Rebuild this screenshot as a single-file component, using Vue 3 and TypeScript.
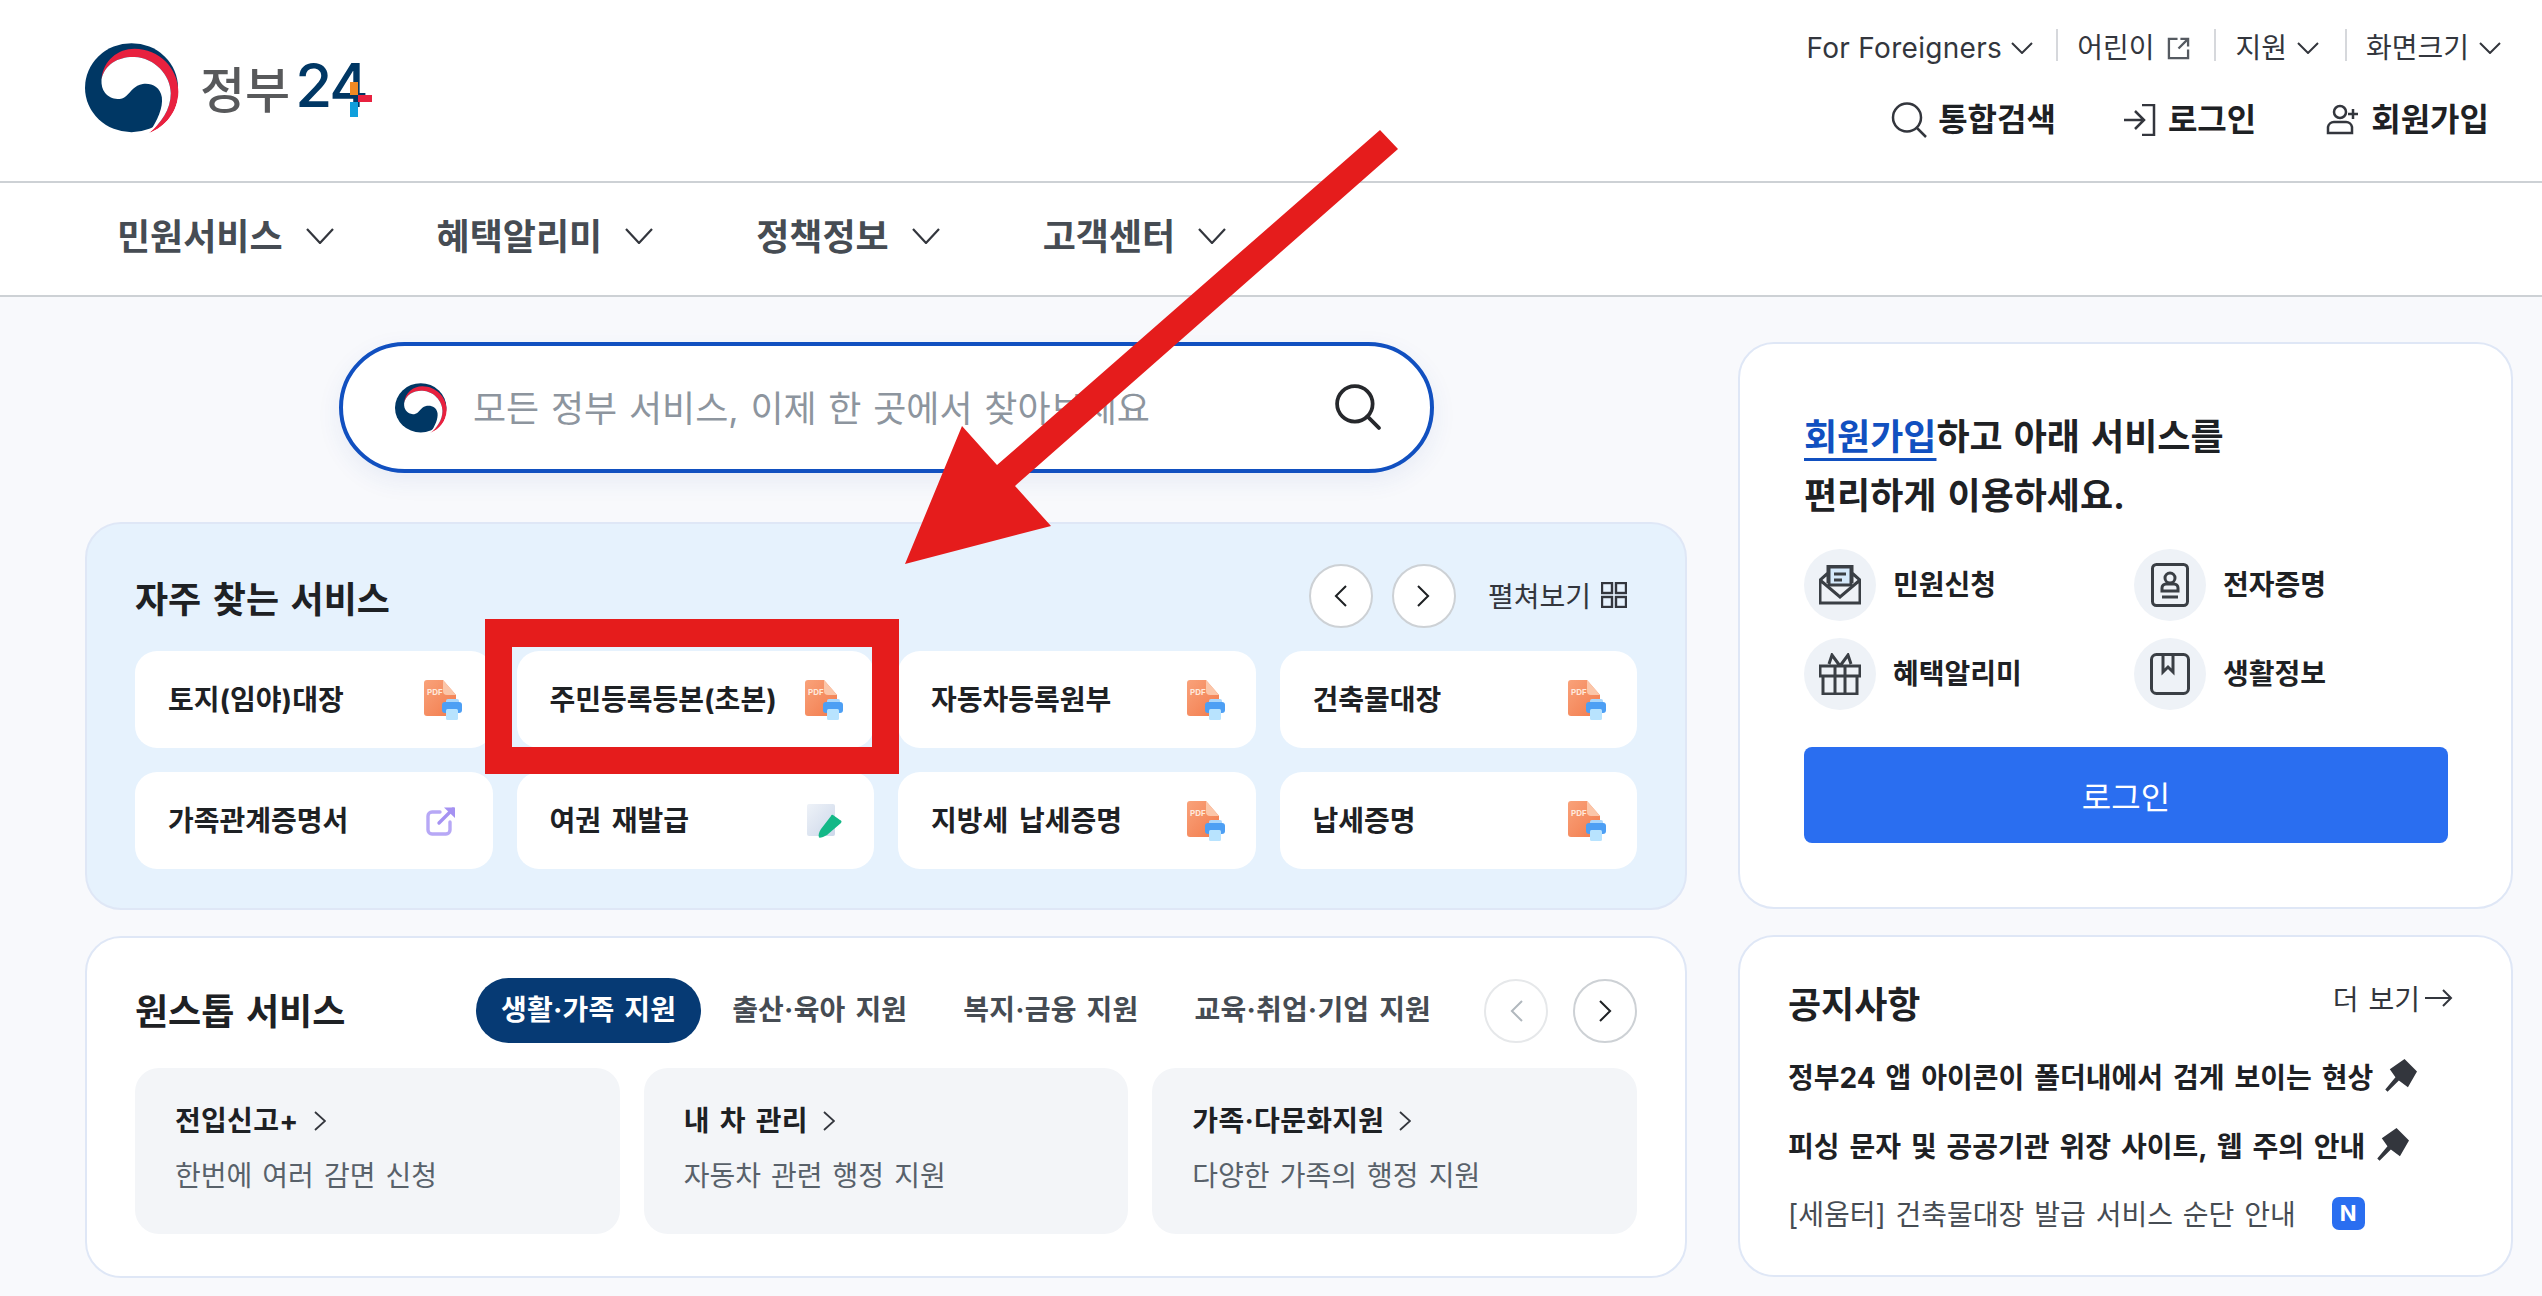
<script setup lang="ts">
interface Service {
  name: string
  icon: 'pdf' | 'link' | 'pen'
}

interface OneStop {
  title: string
  desc: string
}

const gnb = ['민원서비스', '혜택알리미', '정책정보', '고객센터']

const services: Service[] = [
  { name: '토지(임야)대장', icon: 'pdf' },
  { name: '주민등록등본(초본)', icon: 'pdf' },
  { name: '자동차등록원부', icon: 'pdf' },
  { name: '건축물대장', icon: 'pdf' },
  { name: '가족관계증명서', icon: 'link' },
  { name: '여권 재발급', icon: 'pen' },
  { name: '지방세 납세증명', icon: 'pdf' },
  { name: '납세증명', icon: 'pdf' }
]

const tabs = ['생활·가족 지원', '출산·육아 지원', '복지·금융 지원', '교육·취업·기업 지원']

const oneStops: OneStop[] = [
  { title: '전입신고+', desc: '한번에 여러 감면 신청' },
  { title: '내 차 관리', desc: '자동차 관련 행정 지원' },
  { title: '가족·다문화지원', desc: '다양한 가족의 행정 지원' }
]
</script>

<template>
  <div class="page">
    <svg class="defs" width="0" height="0" aria-hidden="true">
      <defs>
        <linearGradient id="pdf-doc" x1="0" y1="0" x2="1" y2="1">
          <stop offset="0" stop-color="#f9a27a" />
          <stop offset="1" stop-color="#f27b4c" />
        </linearGradient>
        <linearGradient id="pen-doc" x1="0" y1="0" x2="1" y2="1">
          <stop offset="0" stop-color="#eef2f8" />
          <stop offset="1" stop-color="#cdd8ea" />
        </linearGradient>
        <symbol id="taegeuk" viewBox="75 68 285 272">
          <ellipse cx="216" cy="203" rx="141" ry="135" fill="#003764" />
          <path d="M125 178C130 120 175 85 225 85C300 85 358 145 358 215C358 275 318 322 270 340C305 310 335 270 335 220C335 165 285 112 225 110C180 108 135 130 125 178Z" fill="#e8213f" />
          <path d="M125 178C135 130 180 108 225 110C285 112 335 165 335 220C335 270 305 310 270 340C295 300 312 265 308 232C303 200 275 188 250 192C225 196 215 215 200 228C180 245 150 238 135 218C128 208 124 195 125 178Z" fill="#fff" />
          <path d="M270 340C318 322 358 275 358 215L362 340Z" fill="#fff" />
        </symbol>
        <symbol id="pdf" viewBox="0 0 38 40">
          <path d="M3 0H19L32 15V33A3 3 0 0 1 29 36H3A3 3 0 0 1 0 33V3A3 3 0 0 1 3 0Z" fill="url(#pdf-doc)" />
          <path d="M19 0L32 15H23A4 4 0 0 1 19 11Z" fill="#fbc6a9" />
          <text x="3" y="15" font-size="8" font-weight="700" fill="#ffe9dc" font-family="Inter, sans-serif">PDF</text>
          <rect x="22" y="19" width="13" height="6" rx="2" fill="#a9d6fb" />
          <rect x="18" y="22" width="20" height="11" rx="3" fill="#4d9ff4" />
          <rect x="22" y="29" width="12" height="11" rx="1.5" fill="#b8e3fe" />
        </symbol>
        <symbol id="link" viewBox="0 0 30 30">
          <path d="M14 6H6A4 4 0 0 0 2 10V24A4 4 0 0 0 6 28H20A4 4 0 0 0 24 24V16" fill="none" stroke="#b7a8f6" stroke-width="3.4" stroke-linecap="round" />
          <path d="M13 17L27 3" fill="none" stroke="#a592f2" stroke-width="3.4" stroke-linecap="round" />
          <path d="M18 1.5H29V12Z" fill="#a592f2" />
        </symbol>
        <symbol id="pen" viewBox="0 0 36 34">
          <rect x="0" y="0" width="28" height="32" rx="2" fill="url(#pen-doc)" />
          <path d="M26 11L33 16A2 2 0 0 1 34 19L20 31C17 33 13 34 12 33.500C11 31 12 28 14 25L24 12A1.500 1.500 0 0 1 26 11Z" fill="#14b887" />
        </symbol>
      </defs>
    </svg>

    <header class="top">
      <a class="logo">
        <svg class="logo-mark"><use href="#taegeuk" /></svg>
        <span class="logo-ko">정부</span>
        <span class="logo-num">24</span>
        <span class="plus plus-top"></span>
        <span class="plus plus-right"></span>
        <span class="plus plus-bottom"></span>
      </a>
      <div class="top-right">
        <ul class="util">
          <li class="latin">
            For Foreigners
            <svg class="chev-sm" viewBox="0 0 22 12"><path d="M1 1L11 11L21 1" /></svg>
          </li>
          <li class="kids">
            어린이
            <svg class="ext" viewBox="0 0 24 24"><path d="M11 2H2V22H22V13M14 2H22V10M22 2L12 12" /></svg>
          </li>
          <li>
            지원
            <svg class="chev-sm" viewBox="0 0 22 12"><path d="M1 1L11 11L21 1" /></svg>
          </li>
          <li>
            화면크기
            <svg class="chev-sm" viewBox="0 0 22 12"><path d="M1 1L11 11L21 1" /></svg>
          </li>
        </ul>
        <div class="account">
          <a class="account-search">
            <svg width="37" height="36" viewBox="0 0 37 36"><circle cx="16" cy="15.500" r="14" /><path d="M26 26L35 35" /></svg>
            통합검색
          </a>
          <a>
            <svg width="33" height="32" viewBox="0 0 33 32"><path d="M1 16H20M12 7L21 16L12 25M19 1H31V31H19" /></svg>
            로그인
          </a>
          <a>
            <svg width="33" height="32" viewBox="0 0 33 32"><circle cx="14" cy="8" r="6" /><path d="M2 29V23A6 6 0 0 1 8 18H20A6 6 0 0 1 26 23V29ZM27 5V15M22 10H32" /></svg>
            회원가입
          </a>
        </div>
      </div>
    </header>

    <nav class="gnb">
      <a v-for="item in gnb" :key="item" class="gnb-item">
        {{ item }}
        <svg class="chev" viewBox="0 0 28 16"><path d="M1 1L14 15L27 1" /></svg>
      </a>
    </nav>

    <main class="main">
      <div class="col">
        <div class="search">
          <svg class="search-mark"><use href="#taegeuk" /></svg>
          <span class="search-text">모든 정부 서비스, 이제 한 곳에서 찾아보세요</span>
          <svg class="search-icon" viewBox="0 0 44 44"><circle cx="19" cy="19" r="17" /><path d="M31 31L42 42" /></svg>
        </div>

        <section class="panel panel-blue">
          <div class="panel-head">
            <h2 class="panel-title">자주 찾는 서비스</h2>
            <div class="head-tools">
              <button class="round">
                <svg viewBox="0 0 14 24"><path d="M13 1L2 12L13 23" /></svg>
              </button>
              <button class="round">
                <svg viewBox="0 0 14 24"><path d="M1 1L12 12L1 23" /></svg>
              </button>
              <span class="expand">
                <span class="expand-label">펼쳐보기</span>
                <svg width="26" height="26" viewBox="0 0 26 26">
                  <rect x="1" y="1" width="10" height="10" /><rect x="15" y="1" width="10" height="10" />
                  <rect x="1" y="15" width="10" height="10" /><rect x="15" y="15" width="10" height="10" />
                </svg>
              </span>
            </div>
          </div>
          <div class="service-grid">
            <a v-for="s in services" :key="s.name" class="service">
              <span class="service-name">{{ s.name }}</span>
              <svg class="service-icon" :class="s.icon"><use :href="'#' + s.icon" /></svg>
            </a>
          </div>
        </section>

        <section class="panel panel-stop">
          <div class="stop-head">
            <h2 class="panel-title stop-title">원스톱 서비스</h2>
            <div class="tabs">
              <a v-for="(tab, i) in tabs" :key="tab" class="tab" :class="{ active: i === 0 }">{{ tab }}</a>
            </div>
            <div class="stop-arrows">
              <button class="round round-white off">
                <svg viewBox="0 0 14 24"><path d="M13 1L2 12L13 23" /></svg>
              </button>
              <button class="round round-white">
                <svg viewBox="0 0 14 24"><path d="M1 1L12 12L1 23" /></svg>
              </button>
            </div>
          </div>
          <div class="stop-grid">
            <a v-for="c in oneStops" :key="c.title" class="stop-card">
              <strong>
                {{ c.title }}
                <svg class="stop-chev" viewBox="0 0 12 20"><path d="M1 1L11 10L1 19" /></svg>
              </strong>
              <span>{{ c.desc }}</span>
            </a>
          </div>
        </section>
      </div>

      <div class="col">
        <section class="panel join">
          <p class="join-text"><em>회원가입</em>하고 아래 서비스를<br />편리하게 이용하세요.</p>
          <div class="join-grid">
            <div class="join-item">
              <span class="join-icon">
                <svg width="42" height="40" viewBox="0 0 42 40">
                  <path d="M10 20V2H32V20Z" fill="#d5e9fb" />
                  <path d="M9 8L1 15V38H41V15L33 8M1 15L21 32L41 15M9 18V1H33V18M15 9H27M15 15H23" fill="none" />
                </svg>
              </span>
              <span class="join-label">민원신청</span>
            </div>
            <div class="join-item">
              <span class="join-icon">
                <svg width="38" height="44" viewBox="0 0 38 44">
                  <rect x="1.500" y="1.500" width="35" height="41" rx="4" fill="none" />
                  <circle cx="19" cy="15" r="5" fill="none" /><path d="M11 28V25A4 4 0 0 1 15 21H23A4 4 0 0 1 27 25V28ZM11 34H27" fill="none" />
                </svg>
              </span>
              <span class="join-label">전자증명</span>
            </div>
            <div class="join-item">
              <span class="join-icon">
                <svg width="42" height="42" viewBox="0 0 42 42">
                  <path d="M1 13H41V23H1ZM4 23V41H38V23M16 13V41M26 13V41M21 13L13 2L10 11M21 13L29 2L32 11" fill="none" />
                </svg>
              </span>
              <span class="join-label">혜택알리미</span>
            </div>
            <div class="join-item">
              <span class="join-icon">
                <svg width="40" height="42" viewBox="0 0 40 42">
                  <rect x="1.500" y="1.500" width="37" height="39" rx="5" fill="none" />
                  <path d="M13 2V19L18 14L23 19V2" fill="none" />
                </svg>
              </span>
              <span class="join-label">생활정보</span>
            </div>
          </div>
          <button class="login">로그인</button>
        </section>

        <section class="panel notice">
          <div class="notice-head">
            <h2 class="panel-title">공지사항</h2>
            <a class="more">
              더 보기
              <svg width="28" height="20" viewBox="0 0 28 20"><path d="M0 10H26M18 2L26 10L18 18" /></svg>
            </a>
          </div>
          <ul class="notice-list">
            <li class="strong">
              정부24 앱 아이콘이 폴더내에서 검게 보이는 현상
              <svg class="pin" viewBox="0 0 30 30"><path d="M19 0L30 11L22 25L14 19L4 29L2 27L11 16L6 9Z" /></svg>
            </li>
            <li class="strong">
              피싱 문자 및 공공기관 위장 사이트, 웹 주의 안내
              <svg class="pin" viewBox="0 0 30 30"><path d="M19 0L30 11L22 25L14 19L4 29L2 27L11 16L6 9Z" /></svg>
            </li>
            <li>
              [세움터] 건축물대장 발급 서비스 순단 안내
              <span class="new">N</span>
            </li>
          </ul>
        </section>
      </div>
    </main>

    <svg class="callout" width="2542" height="1296" viewBox="0 0 2542 1296" aria-hidden="true">
      <path fill-rule="evenodd" d="M485 619H899V774H485ZM512 647V747H872V647Z" />
      <path d="M1380 130L1398 149L1015 486L1051 526L905 564L962 426L997 465Z" />
    </svg>
  </div>
</template>

<style scoped>
.page {
  position: relative;
  width: 2542px;
  height: 1296px;
  overflow: hidden;
  background: #f8f9fc;
  color: #1e2124;
  font-family: Inter, "Noto Sans CJK KR", sans-serif;
}

.defs {
  position: absolute;
}

.top {
  display: flex;
  justify-content: space-between;
  height: 181px;
  box-sizing: border-box;
  background: #fff;
}

.logo {
  position: relative;
  display: flex;
  align-items: center;
  height: 90px;
  margin: 43px 0 0 85px;
}

.logo-mark {
  width: 94px;
  height: 90px;
  margin-right: 21px;
}

.logo-ko {
  margin-bottom: 4px;
  color: #58595b;
  font-family: "Noto Sans CJK KR", sans-serif;
  font-size: 49px;
  font-weight: 500;
  line-height: 1;
}

.logo-num {
  margin-left: 5px;
  margin-bottom: 6px;
  color: #003764;
  font-size: 60px;
  font-weight: 500;
  letter-spacing: -2px;
  line-height: 1;
}

.plus {
  position: absolute;
}

.plus-top {
  left: 265px;
  top: 39px;
  width: 8px;
  height: 13px;
  background: #f08a24;
}

.plus-right {
  left: 273px;
  top: 52px;
  width: 14px;
  height: 7px;
  background: #e8213f;
}

.plus-bottom {
  left: 265px;
  top: 59px;
  width: 8px;
  height: 15px;
  background: #0f9fdc;
}

.top-right {
  display: flex;
  flex-direction: column;
  align-items: flex-end;
  padding: 29px 41px 0 0;
}

.util {
  display: flex;
  height: 32px;
  margin: 0;
  padding: 0;
  list-style: none;
  font-size: 28px;
}

.util li {
  display: flex;
  align-items: center;
  gap: 10px;
  box-sizing: border-box;
  height: 32px;
  padding: 6px 26px 0 19px;
  border-left: 2px solid #d6d8dc;
  color: #33363d;
  line-height: 32px;
}

.util li:first-child {
  border-left: 0;
}

.util li:last-child {
  padding-right: 0;
}

.util li.latin {
  gap: 9px;
  padding-right: 23px;
  letter-spacing: 0.3px;
}

.util li.kids {
  gap: 13px;
  padding-right: 24px;
}

.chev-sm {
  width: 22px;
  height: 12px;
  fill: none;
  stroke: #33363d;
  stroke-width: 2;
}

.ext {
  width: 23px;
  height: 23px;
  fill: none;
  stroke: #555a61;
  stroke-width: 2.400;
}

.account {
  display: flex;
  gap: 70px;
  margin: 36px 12px 0 0;
  font-size: 32px;
  font-weight: 700;
}

.account a {
  display: flex;
  align-items: center;
  gap: 12px;
  line-height: 46px;
}

.account a.account-search {
  gap: 10px;
  margin-right: -3px;
}

.account svg {
  fill: none;
  stroke: #33363d;
  stroke-width: 2.500;
}

.gnb {
  display: flex;
  gap: 103px;
  box-sizing: border-box;
  height: 116px;
  padding: 0 0 10px 117px;
  align-items: center;
  background: #fff;
  border-top: 2px solid #cdd1d5;
  border-bottom: 2px solid #cdd1d5;
}

.gnb-item {
  display: flex;
  align-items: center;
  gap: 23px;
  color: #464c53;
  font-size: 36px;
  font-weight: 700;
}

.chev {
  width: 28px;
  height: 16px;
  margin-top: 4px;
  fill: none;
  stroke: #33363d;
  stroke-width: 2.200;
}

.main {
  display: grid;
  grid-template-columns: 1602px 775px;
  gap: 51px;
  padding: 45px 0 0 85px;
}

.col {
  display: flex;
  flex-direction: column;
  gap: 26px;
}

.search {
  display: flex;
  align-items: center;
  box-sizing: border-box;
  width: 1095px;
  height: 131px;
  margin: 0 0 23px 254px;
  padding: 0 49px 0 52px;
  background: #fff;
  border: 4px solid #1150c0;
  border-radius: 66px;
  box-shadow: 0 8px 24px rgba(40, 80, 160, 0.08);
}

.search-mark {
  width: 52px;
  height: 52px;
  margin-right: 26px;
}

.search-text {
  flex: 1;
  margin-bottom: 4px;
  color: #8d959e;
  font-size: 36px;
  word-spacing: 1.600px;
}

.search-icon {
  width: 46px;
  height: 46px;
  margin-bottom: 2px;
  fill: none;
  stroke: #26282c;
  stroke-width: 3.600;
  stroke-linecap: round;
}

.panel {
  box-sizing: border-box;
  border: 2px solid #dfe7f6;
  border-radius: 36px;
  background: #fff;
}

.panel-blue {
  height: 388px;
  padding: 40px 48px 0;
  background: #e6f2fd;
}

.panel-head {
  display: flex;
  justify-content: space-between;
  align-items: center;
  height: 64px;
  margin-bottom: 23px;
}

.panel-title {
  margin: 0;
  font-size: 36px;
  font-weight: 700;
  line-height: 50px;
  word-spacing: 3px;
}

.panel-head .panel-title {
  margin-top: 7px;
}

.head-tools {
  display: flex;
  align-items: center;
  gap: 19px;
  margin-right: 10px;
}

.round {
  display: flex;
  align-items: center;
  justify-content: center;
  box-sizing: border-box;
  width: 64px;
  height: 64px;
  padding: 0;
  background: #fff;
  border: 2px solid #cdd1d5;
  border-radius: 50%;
}

.round svg {
  width: 13px;
  height: 22px;
  fill: none;
  stroke: #1e2124;
  stroke-width: 2.200;
}

.round.off {
  border-color: #e6e8ea;
}

.round.off svg {
  stroke: #b1b8be;
}

.expand {
  display: flex;
  align-items: center;
  gap: 10px;
  margin-left: 13px;
  color: #33363d;
  font-size: 28px;
}

.expand-label {
  margin-bottom: 3px;
}

.expand svg {
  margin-bottom: 2px;
  fill: none;
  stroke: #33363d;
  stroke-width: 2.400;
}

.service-grid {
  display: grid;
  grid-template-columns: repeat(4, 1fr);
  grid-auto-rows: 97px;
  gap: 24px;
}

.service {
  display: flex;
  align-items: center;
  justify-content: space-between;
  padding: 0 31px 0 33px;
  background: #fff;
  border-radius: 22px;
  font-size: 28px;
  font-weight: 700;
  word-spacing: 4px;
}

.service-name {
  margin-bottom: 4px;
}

.service-icon {
  width: 38px;
  height: 40px;
}

.service-icon.link {
  width: 30px;
  height: 30px;
  margin-right: 6px;
}

.service-icon.pen {
  width: 36px;
  height: 34px;
}

.panel-stop {
  height: 342px;
  padding: 40px 48px 0;
}

.stop-head {
  display: flex;
  align-items: center;
  height: 65px;
  margin-bottom: 25px;
}

.stop-title {
  width: 341px;
  margin-top: 2px;
}

.tabs {
  display: flex;
  gap: 6px;
}

.tab {
  padding: 0 25px;
  border-radius: 33px;
  color: #464c53;
  font-size: 28px;
  font-weight: 700;
  line-height: 65px;
  letter-spacing: 0.200px;
  word-spacing: 3px;
}

.tab.active {
  background: #063a74;
  color: #fff;
}

.stop-arrows {
  display: flex;
  gap: 25px;
  margin-left: auto;
}

.stop-grid {
  display: grid;
  grid-template-columns: repeat(3, 1fr);
  gap: 24px;
}

.stop-card {
  display: flex;
  flex-direction: column;
  gap: 13px;
  box-sizing: border-box;
  height: 166px;
  padding: 32px 40px 0;
  background: #f3f5f8;
  border-radius: 24px;
}

.stop-card strong {
  display: flex;
  align-items: center;
  gap: 15px;
  font-size: 28px;
  font-weight: 700;
  line-height: 42px;
  letter-spacing: 0.300px;
  word-spacing: 3px;
}

.stop-card span {
  color: #58616a;
  font-size: 28px;
  font-weight: 400;
  line-height: 42px;
  word-spacing: 2.200px;
}

.stop-chev {
  width: 12px;
  height: 20px;
  fill: none;
  stroke: #33363d;
  stroke-width: 1.800;
}

.join {
  height: 567px;
  padding: 64px 64px 0;
}

.join-text {
  margin: 0;
  font-size: 36px;
  font-weight: 700;
  line-height: 59px;
  word-spacing: 2.500px;
}

.join-text em {
  color: #1150c0;
  font-style: normal;
  text-decoration: underline;
  text-decoration-thickness: 3px;
  text-underline-offset: 8px;
}

.join-grid {
  display: grid;
  grid-template-columns: 330px 1fr;
  grid-auto-rows: 73px;
  row-gap: 16px;
  margin-top: 22px;
}

.join-item {
  display: flex;
  align-items: center;
  gap: 17px;
  font-size: 28px;
  font-weight: 700;
}

.join-label {
  margin-bottom: 4px;
}

.join-icon {
  display: flex;
  align-items: center;
  justify-content: center;
  width: 72px;
  height: 72px;
  background: #eef2f7;
  border-radius: 50%;
}

.join-icon svg {
  stroke: #3a3f45;
  stroke-width: 3;
}

.login {
  display: block;
  width: 644px;
  height: 96px;
  margin-top: 37px;
  background: #2a6ef0;
  border: 0;
  border-radius: 8px;
  color: #fff;
  font-family: inherit;
  font-size: 32px;
}

.notice {
  height: 342px;
  padding: 43px 58px 0 48px;
}

.notice-head {
  display: flex;
  justify-content: space-between;
  margin-bottom: 15px;
}

.more {
  display: flex;
  align-items: center;
  gap: 5px;
  height: 36px;
  color: #33363d;
  font-size: 28px;
  word-spacing: 2px;
}

.more svg {
  fill: none;
  stroke: #33363d;
  stroke-width: 2;
}

.notice-list {
  margin: 0;
  padding: 0;
  list-style: none;
  font-size: 28px;
}

.notice-list li {
  display: flex;
  align-items: center;
  gap: 14px;
  box-sizing: border-box;
  height: 68.500px;
  padding-bottom: 6px;
  color: #464c53;
  word-spacing: 2px;
}

.notice-list li.strong {
  gap: 10px;
  color: #1e2124;
  font-weight: 700;
  word-spacing: 3.300px;
}

.pin {
  width: 34px;
  height: 34px;
  fill: #33363d;
}

.new {
  display: flex;
  align-items: center;
  justify-content: center;
  width: 33px;
  height: 33px;
  margin-left: 22px;
  background: #2a6ef0;
  border-radius: 7px;
  color: #fff;
  font-size: 22px;
  font-weight: 700;
}

.callout {
  position: absolute;
  left: 0;
  top: 0;
  fill: #e51c1c;
  pointer-events: none;
}
</style>
